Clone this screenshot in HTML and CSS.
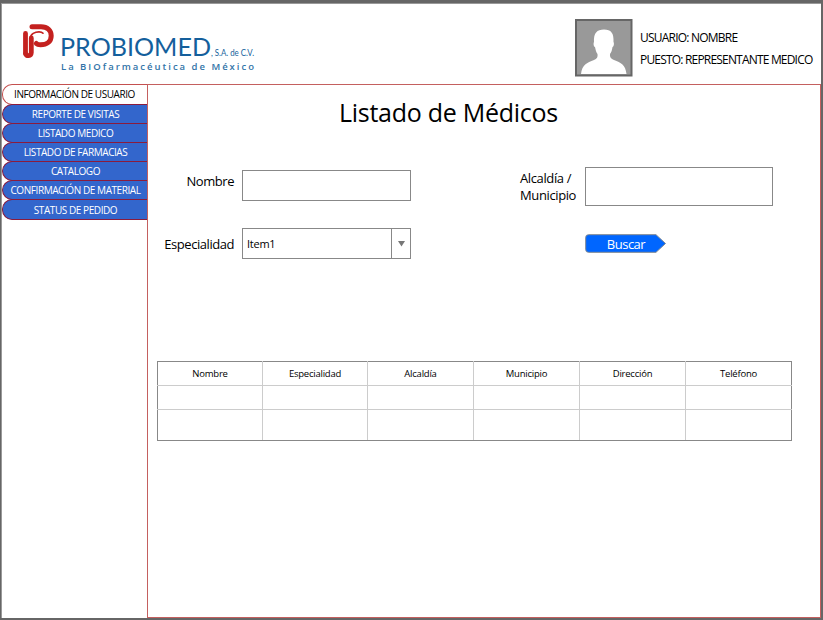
FILE: index.html
```html
<!DOCTYPE html>
<html lang="es">
<head>
<meta charset="utf-8">
<title>Listado de Médicos</title>
<link rel="stylesheet" href="styles.css">
</head>
<body>
<div class="window">
  <header class="header">
    <svg class="logo" width="240" height="56" viewBox="20 20 240 56">
      <g fill="none" stroke="#c4211f" stroke-linecap="round">
        <path d="M25.500 33.500V53.500" stroke-width="4.800"/>
        <path d="M25.700 54C26 56.500 31 56.500 31.300 52.500V38" stroke-width="4.800"/>
        <path d="M32 26.700H41C47.500 26.700 51.200 30.500 51.200 35.700C51.200 41.500 47 44.800 40.500 44.800C38.500 44.800 37 44.200 36.300 43.500" stroke-width="5"/>
        <path d="M30.500 38C30.500 34 35 31.800 39 31.800C41 31.800 42.300 32.300 43 33.200" stroke-width="1.700"/>
      </g>
      <text class="logo-name" x="60" y="55.500" textLength="151" lengthAdjust="spacingAndGlyphs">PROBIOMED</text>
      <text class="logo-suffix" x="211" y="55.500" textLength="43" lengthAdjust="spacingAndGlyphs">, S.A. de C.V.</text>
      <text class="logo-tagline" x="61" y="70" textLength="193">La BIOfarmacéutica de México</text>
    </svg>
    <div class="user">
      <svg class="avatar" width="58" height="58" viewBox="0 0 58 58">
        <rect x="1" y="1" width="55.500" height="55.500" fill="#999" stroke="#666" stroke-width="2"/>
        <path d="M6 55C7 46 12 43.500 19 41C22 40 23 38 22.500 35C21 33 20.500 30.500 20 28C18.500 27.500 18.300 24 19 23C18.500 14 22 10.500 29 10.500C36 10.500 39 14 38.500 23C39.300 24 39 27.500 37.500 28C37 31 36.500 33 35 35C34.500 38 36 40 39 41C46 43.500 50.500 46 51.500 55Z" fill="#fff"/>
      </svg>
      <div class="user-info">
        <div><span class="user-name">USUARIO: NOMBRE</span></div>
        <div><span class="user-role">PUESTO: REPRESENTANTE MEDICO</span></div>
      </div>
    </div>
  </header>
  <div class="content">
    <nav class="tabs">
      <a class="tab active">INFORMACIÓN DE USUARIO</a>
      <a class="tab">REPORTE DE VISITAS</a>
      <a class="tab">LISTADO MEDICO</a>
      <a class="tab">LISTADO DE FARMACIAS</a>
      <a class="tab">CATALOGO</a>
      <a class="tab">CONFIRMACIÓN DE MATERIAL</a>
      <a class="tab">STATUS DE PEDIDO</a>
    </nav>
    <main class="panel">
      <h1>Listado de Médicos</h1>
      <form class="filters">
        <label class="label">Nombre</label>
        <div class="input name"></div>
        <label class="label place">Alcaldía /<br>Municipio</label>
        <div class="input town"></div>
        <label class="label specialty">Especialidad</label>
        <div class="select"><span class="value">Item1</span><span class="arrow"><svg width="7" height="6" viewBox="0 0 7 6"><path d="M0 0H7L3.500 5.500Z" fill="#777"/></svg></span></div>
        <div class="search">
          <svg class="search-shape" width="82" height="19" viewBox="0 0 82 19"><path d="M3.500 .7H71L80.500 9.500L71 18.300H3.500Q.7 18.300 .7 15.500V3.500Q.7 .7 3.500 .7Z" fill="#06f" stroke="#7f8790" stroke-width="1"/></svg>
          <span class="search-text">Buscar</span>
        </div>
      </form>
      <table class="results">
        <colgroup><col class="narrow"><col class="narrow"><col><col><col><col></colgroup>
        <thead><tr><th>Nombre</th><th>Especialidad</th><th>Alcaldía</th><th>Municipio</th><th>Dirección</th><th>Teléfono</th></tr></thead>
        <tbody>
          <tr><td></td><td></td><td></td><td></td><td></td><td></td></tr>
          <tr class="last"><td></td><td></td><td></td><td></td><td></td><td></td></tr>
        </tbody>
      </table>
    </main>
  </div>
</div>
</body>
</html>
```
FILE: styles.css
```css
* { box-sizing: border-box; }
body {
  margin: 0;
  background: #666;
  color: #000;
  font-family: "Open Sans", "Noto Sans", sans-serif;
}
.window {
  width: 823px;
  height: 620px;
  border: solid #666;
  border-width: 3px 2px 2px 1px;
  background: #fff;
  box-shadow: inset 1px 1px #999;
  display: flex;
  flex-direction: column;
}
.header {
  height: 81px;
  flex: none;
  display: flex;
  justify-content: space-between;
  padding: 16px 8px 0 19px;
}
.logo { margin-top: 1px; }
.logo-name { font: 24.500px Lato, sans-serif; fill: #145f9c; }
.logo-suffix { font: 9px Lato, sans-serif; fill: #145f9c; }
.logo-tagline { font: 600 9.500px "Open Sans", sans-serif; fill: #3274a8; }
.user { display: flex; gap: 7px; width: 238px; }
.avatar { flex: none; }
.user-info {
  padding-top: 8px;
  font-size: 12px;
  line-height: 22px;
  white-space: nowrap;
}
.user-name { letter-spacing: -.78px; }
.user-role { letter-spacing: -.81px; }
.content { display: flex; flex: 1; padding-left: 1px; }
.tabs { width: 145px; flex: none; }
.tab {
  display: flex;
  align-items: center;
  justify-content: center;
  height: 20.200px;
  margin-bottom: -1px;
  padding-left: 1px;
  border: 1px solid #8b1b3c;
  border-right: 0;
  border-radius: 10px 0 0 10px;
  background: #36c;
  color: #fff;
  font-size: 10px;
  letter-spacing: -.43px;
  white-space: nowrap;
}
.tab.active {
  height: 20.500px;
  padding: 0 1px 0 0;
  background: #fff;
  color: #000;
  border-color: #c4504f;
}
.panel {
  flex: 1;
  border: 1px solid #c4605f;
  padding: 0 28px 0 9px;
}
h1 {
  margin: 7px 0 0 -6px;
  padding-left: 188px;
  font-size: 25px;
  line-height: 40px;
  font-weight: 400;
  letter-spacing: -.27px;
  white-space: nowrap;
}
.filters {
  display: grid;
  grid-template-columns: 77px 169px 93px 57px 188px;
  grid-template-rows: 41px 31px;
  column-gap: 8px;
  row-gap: 20px;
  margin-top: 35px;
}
.label {
  font-size: 13px;
  line-height: 17px;
  letter-spacing: -.45px;
  text-align: right;
  white-space: nowrap;
  padding-top: 6px;
}
.label.specialty { padding-top: 8px; }
.label.place { grid-column: 4; text-align: left; padding-top: 3px; letter-spacing: -.38px; }
.input { border: 1px solid #888; background: #fff; }
.input.name { height: 31px; margin-top: 3px; }
.input.town { height: 39px; }
.select { display: flex; border: 1px solid #888; }
.value {
  flex: 1;
  padding-left: 4px;
  font-size: 11px;
  line-height: 30px;
  letter-spacing: -.25px;
}
.arrow {
  width: 19px;
  border-left: 1px solid #888;
  display: flex;
  align-items: center;
  justify-content: center;
}
.search {
  grid-column: 5;
  display: grid;
  width: 82px;
  height: 19px;
  margin-top: 6px;
}
.search-shape, .search-text { grid-area: 1 / 1; }
.search-text {
  color: #fff;
  font-size: 13px;
  line-height: 20px;
  letter-spacing: -.5px;
  text-align: center;
}
.results {
  width: 635px;
  margin-top: 102px;
  border-collapse: collapse;
  table-layout: fixed;
  border: 1px solid #888;
}
.results .narrow { width: 105px; }
.results th, .results td { border: 1px solid #ccc; padding: 0; height: 24px; }
.results thead th { border-top-color: #888; }
.results th {
  font-size: 9.500px;
  font-weight: 400;
  letter-spacing: -.22px;
}
.results .last td { height: 31px; border-bottom-color: #888; }
.results tr > :first-child { border-left-color: #888; }
.results tr > :last-child { border-right-color: #888; }
```
